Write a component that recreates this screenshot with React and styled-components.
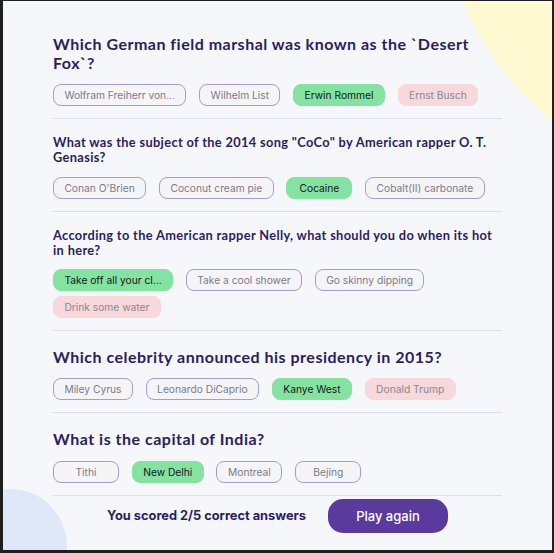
import React from "react";
import styled, { createGlobalStyle } from "styled-components";

const GlobalStyle = createGlobalStyle`
  html, body {
    margin: 0;
    padding: 0;
  }
  body {
    background: #1f1f1f;
    padding: 1px 2px 3px 3px;
  }
`;

const Card = styled.main`
  position: relative;
  overflow: hidden;
  height: 549px;
  box-sizing: border-box;
  background: #f5f7fb;
  padding: 17px 50px 0 50px;
`;

const Blob = styled.div`
  position: absolute;
  border-radius: 50%;
  z-index: 0;
`;

const YellowBlob = styled(Blob)`
  width: 666px;
  height: 666px;
  left: 431px;
  top: -467px;
  background: #fffad1;
`;

const BlueBlob = styled(Blob)`
  width: 114px;
  height: 114px;
  left: -50px;
  top: 488px;
  background: #dee8f8;
`;

const List = styled.div`
  position: relative;
  z-index: 1;
  display: flex;
  flex-direction: column;
`;

const Block = styled.section`
  padding: 16px 0 12px;
  border-bottom: 1px solid #dbdef0;
`;

const Question = styled.h2`
  margin: 0 0 12px;
  font-family: "Lato", "Noto Sans", sans-serif;
  font-weight: 700;
  color: #2c1d62;
  font-size: ${(p) => (p.$small ? "12.8px" : "16px")};
  line-height: ${(p) => (p.$small ? "14.7px" : "19.2px")};
  letter-spacing: ${(p) => (p.$small ? "0.35px" : "0.5px")};
`;

const Answers = styled.div`
  display: flex;
  flex-wrap: wrap;
  gap: 5px 12.8px;
`;

const pillColors = {
  idle: { bg: "#f5f5f8", border: "#a49cd2", color: "#7a7a88" },
  correct: { bg: "#84e3a0", border: "#84e3a0", color: "#15151a" },
  wrong: { bg: "#f7d8db", border: "#f7d8db", color: "#888894" },
};

const Pill = styled.span`
  box-sizing: border-box;
  display: inline-flex;
  align-items: center;
  justify-content: center;
  height: 22px;
  min-width: 66px;
  padding: 0 10.4px;
  border-radius: 8px;
  font-family: "Inter", "Liberation Sans", sans-serif;
  font-size: 10.24px;
  white-space: nowrap;
  background: ${(p) => pillColors[p.$state].bg};
  border: 1px solid ${(p) => pillColors[p.$state].border};
  color: ${(p) => pillColors[p.$state].color};
`;

const Footer = styled.div`
  position: relative;
  z-index: 1;
  display: flex;
  align-items: center;
  justify-content: center;
  gap: 22px;
  padding-top: 3px;
`;

const Score = styled.p`
  margin: 0;
  font-family: "Inter", "Liberation Sans", sans-serif;
  font-weight: 700;
  font-size: 12.8px;
  color: #2c1d62;
`;

const PlayButton = styled.button`
  width: 120px;
  height: 34px;
  border: none;
  border-radius: 15px;
  background: #5b3a9e;
  color: #ffffff;
  font-family: "Inter", "Liberation Sans", sans-serif;
  font-weight: 500;
  font-size: 13px;
  cursor: pointer;
`;

const truncate = (s) => (s.length > 20 ? s.slice(0, 20) + "..." : s);

const questions = [
  {
    q: "Which German field marshal was known as the `Desert Fox`?",
    a: [
      ["Wolfram Freiherr von Richthofen", "idle"],
      ["Wilhelm List", "idle"],
      ["Erwin Rommel", "correct"],
      ["Ernst Busch", "wrong"],
    ],
  },
  {
    q: 'What was the subject of the 2014 song "CoCo" by American rapper O. T. Genasis?',
    small: true,
    a: [
      ["Conan O'Brien", "idle"],
      ["Coconut cream pie", "idle"],
      ["Cocaine", "correct"],
      ["Cobalt(II) carbonate", "idle"],
    ],
  },
  {
    q: "According to the American rapper Nelly, what should you do when its hot in here?",
    small: true,
    a: [
      ["Take off all your clothes", "correct"],
      ["Take a cool shower", "idle"],
      ["Go skinny dipping", "idle"],
      ["Drink some water", "wrong"],
    ],
  },
  {
    q: "Which celebrity announced his presidency in 2015?",
    a: [
      ["Miley Cyrus", "idle"],
      ["Leonardo DiCaprio", "idle"],
      ["Kanye West", "correct"],
      ["Donald Trump", "wrong"],
    ],
  },
  {
    q: "What is the capital of India?",
    a: [
      ["Tithi", "idle"],
      ["New Delhi", "correct"],
      ["Montreal", "idle"],
      ["Bejing", "idle"],
    ],
  },
];

export default function App() {
  return (
    <>
      <GlobalStyle />
      <Card>
        <YellowBlob />
        <BlueBlob />
        <List>
          {questions.map((item, i) => (
            <Block key={i}>
              <Question $small={item.small}>{item.q}</Question>
              <Answers>
                {item.a.map(([text, state]) => (
                  <Pill key={text} $state={state}>
                    {truncate(text)}
                  </Pill>
                ))}
              </Answers>
            </Block>
          ))}
        </List>
        <Footer>
          <Score>You scored 2/5 correct answers</Score>
          <PlayButton>Play again</PlayButton>
        </Footer>
      </Card>
    </>
  );
}
